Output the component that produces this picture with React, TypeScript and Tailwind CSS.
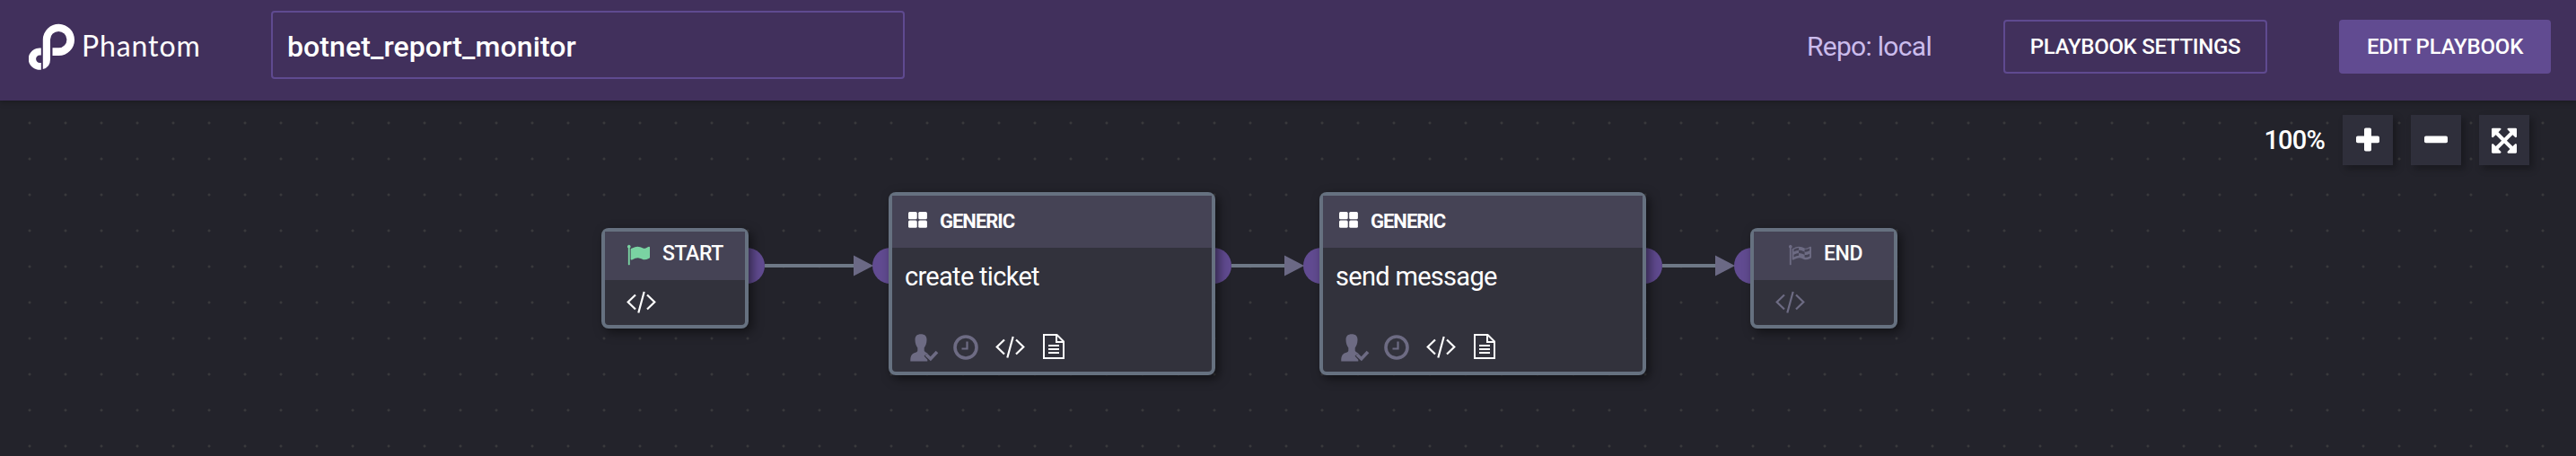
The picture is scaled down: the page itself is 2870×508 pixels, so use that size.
import type { ReactNode } from "react";

const FLAG =
  "M320 256q0 72-64 110v1266q0 13-9.500 22.500t-22.500 9.500h-64q-13 0-22.500-9.500t-9.500-22.500v-1266q-64-38-64-110 0-53 37.500-90.500t90.500-37.500 90.500 37.500 37.500 90.500zm1472 64v763q0 25-12.500 38.500t-39.500 27.500q-215 116-369 116-61 0-123.500-22t-108.500-48-115.500-48-142.500-22q-192 0-464 146-17 9-33 9-26 0-45-19t-19-45v-742q0-32 31-55 21-14 79-43 236-120 421-120 107 0 200 29t219 88q38 19 88 19 54 0 117.500-21t110-47 88-47 54.500-21q26 0 45 19t19 45z";
const CHECKERED =
  "M832 951v-192q-181 16-384 117v185q205-96 384-110zm0-418v-197q-172 8-384 126v189q215-111 384-118zm832 463v-184q-235 116-384 71v-224q-20-6-39-15-5-3-33-17t-34.500-17-31.500-15-34.500-15.500-32.500-13-36-12.500-35-8.500-39.500-7.500-39.500-4-44-2q-23 0-49 3v222h19q102 0 192.500 29t197.500 82q19 9 39 15v188q42 17 91 17 120 0 293-92zm0-427v-189q-169 91-306 91-45 0-78-8v196q148 42 384-90zm-1344-313q0 35-17.500 64t-46.500 46v1266q0 14-9 23t-23 9h-64q-14 0-23-9t-9-23v-1266q-29-17-46.500-46t-17.500-64q0-53 37.500-90.500t90.500-37.500 90.500 37.500 37.500 90.500zm1472 64v763q0 39-35 57-10 5-17 9-218 116-369 116-88 0-158-35l-28-14q-64-33-99-48t-91-29-114-14q-102 0-235.500 44t-228.500 102q-15 9-33 9-16 0-32-8-32-19-32-56v-742q0-35 31-55 35-21 78.500-42.500t114-52 152.500-49.500 155-19q112 0 209 31t209 86q38 19 89 19 122 0 310-112 22-12 31-17 31-16 62 2 31 20 31 54z";
const ARROWS =
  "M1411 541l-355 355 355 355 144-144q29-31 70-14 39 17 39 59v448q0 26-19 45t-45 19h-448q-42 0-59-40-17-39 14-69l144-144-355-355-355 355 144 144q31 30 14 69-17 40-59 40h-448q-26 0-45-19t-19-45v-448q0-42 40-59 39-17 69 14l144 144 355-355-355-355-144 144q-19 19-45 19-12 0-24-5-40-17-40-59v-448q0-26 19-45t45-19h448q42 0 59 40 17 39-14 69l-144 144 355 355 355-355-144-144q-31-30-14-69 17-40 59-40h448q26 0 45 19t19 45v448q0 42-39 59-13 5-25 5-26 0-45-19z";

function Logo() {
  return (
    <div className="flex w-[222px] items-center pl-8 text-white">
      <svg className="h-[52px] w-[52px] shrink-0" viewBox="32 26 52 52" fill="currentColor">
        <path d="M47.8 77V44a17.600 17.600 0 1 1 17.700 18H58.500V53.300H65.500a9.200 9.200 0 1 0-9.500-9.300V66q0 9-8.200 11z" />
        <path d="M45.800 53.500v8h-1.500a4.200 4.200 0 0 0 0 8.400h1.500v7.800a12.500 12.200 0 1 1 0-24.200z" />
      </svg>
      <span className="-mt-0.5 ml-[7px] font-[Lato] text-[32px] leading-[40px] tracking-[0.9px]">Phantom</span>
    </div>
  );
}

function CodeIcon({ className }: { className: string }) {
  return (
    <svg className={"h-[26px] w-[33px] shrink-0 " + className} viewBox="0 0 33 26" fill="none" stroke="currentColor" strokeWidth="2.200">
      <path d="M10 4.500 1.700 12.500 10 20.500M23 4.500l8.300 8L23 20.500M19.700 1 13.300 24.500" />
    </svg>
  );
}

function UserCheckIcon() {
  return (
    <svg className="h-[31px] w-8 shrink-0 text-[#6d6b83]" viewBox="0 0 32 31" fill="currentColor">
      <path d="M12 .3c4.200 0 6.500 2 6.500 6.200 0 4-1.300 7-2.800 9v3c.3 1.500 2.300 2.300 3.800 3l-4 3 3.800 4.200v1.800H.3c-.2-4.500.7-7.800 4.200-9.200 2-.8 3.800-1.300 3.800-2.800v-3C6.800 13.500 5.500 10.500 5.500 6.500 5.500 2.300 7.800.3 12 .3z" />
      <path d="m17.800 23 5 4.800 7.200-7.800" fill="none" stroke="currentColor" strokeWidth="3.600" />
    </svg>
  );
}

function ClockIcon() {
  return (
    <svg className="h-7 w-7 shrink-0 text-[#6d6b83]" viewBox="0 0 28 28" fill="none" stroke="currentColor">
      <circle cx="14" cy="14" r="12" strokeWidth="3.600" />
      <path d="M15.500 7.500v8H9.500" strokeWidth="2.200" />
    </svg>
  );
}

function DocIcon() {
  return (
    <svg className="h-7 w-6 shrink-0 text-white" viewBox="0 0 24 28" fill="none" stroke="currentColor" strokeWidth="2">
      <path d="M1 1h14.500L23 8.500V27H1zM15 1v8h8M6 13h12M6 17h12M6 21h12" />
    </svg>
  );
}

function GridIcon() {
  return (
    <svg className="h-[18px] w-[21px] shrink-0 text-white" viewBox="0 0 21 18" fill="currentColor">
      <rect x="0" y="0" width="9.700" height="8.200" rx="1.500" />
      <rect x="11.200" y="0" width="9.700" height="8.200" rx="1.500" />
      <rect x="0" y="9.500" width="9.700" height="8.200" rx="1.500" />
      <rect x="11.200" y="9.500" width="9.700" height="8.200" rx="1.500" />
    </svg>
  );
}

function FlagIcon({ path, className }: { path: string; className: string }) {
  return (
    <svg className={"h-[26px] w-[26px] shrink-0 " + className} viewBox="0 0 1792 1792" fill="currentColor">
      <path d={path} />
    </svg>
  );
}

const nodeBox =
  "absolute rounded-lg border-4 border-[#667180] bg-[#32323c] shadow-[4px_4px_12px_rgba(0,0,0,0.5)]";

function TerminalNode({ place, head, label, code, icon }: { place: string; head: string; label: string; code: string; icon: ReactNode }) {
  return (
    <div className={nodeBox + " top-[142px] h-28 w-[164px] " + place}>
      <div className={"flex h-[54px] items-start bg-[#454355] pt-[13px] " + head}>
        {icon}
        <span className="ml-3.5 text-[23px] leading-6 font-medium tracking-[-0.4px] text-white">{label}</span>
      </div>
      <div className="pt-3 pl-6">
        <CodeIcon className={code} />
      </div>
    </div>
  );
}

function ActionNode({ place, name }: { place: string; name: string }) {
  return (
    <div className={nodeBox + " top-[102px] h-[204px] w-[364px] " + place}>
      <div className="flex h-[58px] items-start bg-[#454355] pt-[18px] pl-[18px]">
        <GridIcon />
        <span className="ml-3.5 text-[22px] leading-[22px] font-bold tracking-[-1px] text-white">GENERIC</span>
      </div>
      <div className="pt-[14px] pl-3.5 text-[29px] leading-[36px] tracking-[-0.7px] text-white">{name}</div>
      <div className="mt-[46px] flex items-start pl-5">
        <UserCheckIcon />
        <div className="ml-[15.500px] pt-px"><ClockIcon /></div>
        <div className="ml-[19px] pt-0.5"><CodeIcon className="text-white" /></div>
        <div className="ml-5"><DocIcon /></div>
      </div>
    </div>
  );
}

const edges = [
  { from: 832, to: 992 },
  { from: 1352, to: 1472 },
  { from: 1832, to: 1952 },
];

function Edges() {
  return (
    <svg className="absolute top-0 left-0 h-[396px] w-[2870px]" viewBox="0 0 2870 396">
      {edges.map((e) => (
        <g key={e.from}>
          <circle cx={e.from} cy="184" r="20" fill="#614b91" />
          <circle cx={e.to} cy="184" r="20" fill="#614b91" />
          <rect x={e.from + 20} y="182" width={e.to - e.from - 58} height="4" fill="#6e7886" />
          <path d={`M${e.to - 41} 172.500v23l22-11.500z`} fill="#6b6985" />
        </g>
      ))}
    </svg>
  );
}

function ZoomButton({ children }: { children: ReactNode }) {
  return (
    <button className="flex h-14 w-14 items-center justify-center bg-[#2f2f3b] text-white shadow-[4px_4px_8px_rgba(0,0,0,0.3)]">
      <svg className="h-14 w-14" viewBox="0 0 56 56" fill="currentColor">
        {children}
      </svg>
    </button>
  );
}

export default function App() {
  return (
    <div className="h-[508px] w-[2870px] overflow-hidden bg-[#23232b] font-[Roboto,sans-serif]">
      <header className="relative z-10 flex h-28 items-start bg-[#41305c] shadow-[0_2px_6px_rgba(0,0,0,0.25)]">
        <div className="flex pt-[26px]">
          <Logo />
        </div>
        <div className="mt-3 ml-20 flex h-[76px] w-[706px] items-center rounded border-2 border-[#5f4a90] pl-4 text-[32px] leading-none font-medium tracking-[0.1px] text-white">
          <span className="pt-1">botnet_report_monitor</span>
        </div>
        <div className="mt-[22px] mr-7 ml-auto flex h-[60px] items-center">
          <span className="mr-20 text-[30px] leading-none tracking-[-0.7px] text-[#cbbcec]">Repo: local</span>
          <button className="mr-20 h-[60px] w-[294px] rounded border-2 border-[#5f4a90] text-[24px] leading-none font-medium tracking-[-0.3px] text-white">
            PLAYBOOK SETTINGS
          </button>
          <button className="h-[60px] w-[236px] rounded bg-[#614b91] text-[24px] leading-none font-medium tracking-[-0.2px] text-white">
            EDIT PLAYBOOK
          </button>
        </div>
      </header>
      <main className="relative h-[396px] bg-[radial-gradient(circle_at_center,#39393c_0.8px,transparent_2px)] bg-[size:40px_40px] bg-[position:13px_5px]">
        <Edges />
        <TerminalNode
          place="left-[670px]"
          head="pl-6"
          label="START"
          code="text-white"
          icon={<FlagIcon path={FLAG} className="text-[#7ad3a2]" />}
        />
        <ActionNode place="left-[990px]" name="create ticket" />
        <ActionNode place="left-[1470px]" name="send message" />
        <TerminalNode
          place="left-[1950px]"
          head="pl-[38px]"
          label="END"
          code="text-[#6d6b83]"
          icon={<FlagIcon path={CHECKERED} className="text-[#6d6b83]" />}
        />
        <div className="flex items-center justify-end gap-5 pt-4 pr-[52px]">
          <span className="text-[29px] leading-none font-medium tracking-[-0.8px] text-white">100%</span>
          <ZoomButton>
            <rect x="15" y="23.500" width="26" height="7.800" rx="1.800" />
            <rect x="24" y="14.500" width="8" height="26" rx="1.800" />
          </ZoomButton>
          <ZoomButton>
            <rect x="15" y="23.500" width="26" height="7.800" rx="1.800" />
          </ZoomButton>
          <ZoomButton>
            <path transform="translate(11.670 12.300) scale(0.01823)" d={ARROWS} />
          </ZoomButton>
        </div>
      </main>
    </div>
  );
}
